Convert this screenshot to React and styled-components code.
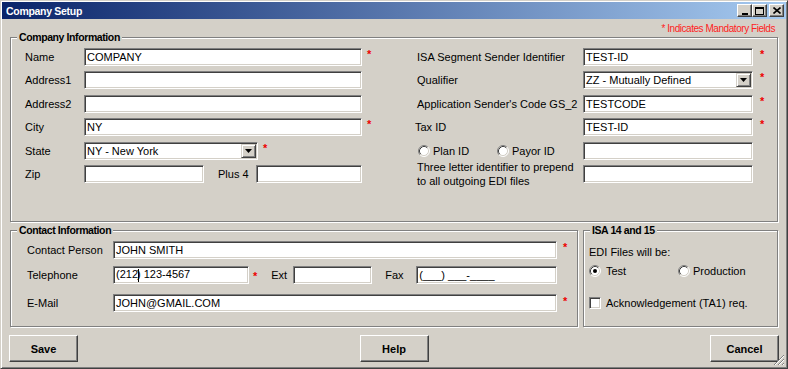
import React from 'react';
import styled, { createGlobalStyle } from 'styled-components';

const GlobalStyle = createGlobalStyle`
  html, body { margin: 0; padding: 0; background: #D4D0C8; }
  body { font-family: "Liberation Sans", Arial, sans-serif; font-size: 11px; color: #000; }
  * { box-sizing: border-box; }
`;

const Window = styled.div`
  position: relative;
  width: 788px;
  height: 369px;
  border: 1px solid;
  border-color: #D4D0C8 #404040 #404040 #D4D0C8;
  padding: 1px;
  box-shadow: inset 1px 1px 0 #fff, inset -1px -1px 0 #808080;
  background: #D4D0C8;
  display: flex;
  flex-direction: column;
`;

const TitleBar = styled.div`
  height: 17px;
  flex: none;
  background: linear-gradient(to right, #0A246A, #A6CAF0);
  display: flex;
  align-items: center;
  justify-content: space-between;
  padding: 0 2px 0 4px;
`;

const TitleText = styled.span`
  color: #fff;
  font-weight: bold;
  font-size: 10.5px;
  letter-spacing: -0.3px;
`;

const CaptionGroup = styled.div`
  display: flex;
  align-items: center;
`;

const CaptionBtn = styled.div`
  width: 15px;
  height: 13px;
  margin-left: ${p => p.$ml || 0}px;
  background: #D4D0C8;
  border: 1px solid;
  border-color: #fff #404040 #404040 #fff;
  box-shadow: inset -1px -1px 0 #808080;
  display: flex;
  align-items: center;
  justify-content: center;
`;

const Content = styled.div`
  flex: 1;
  display: flex;
  flex-direction: column;
  padding: 0 8px;
`;

const NoteRow = styled.div`
  height: 18px;
  flex: none;
  display: flex;
  align-items: center;
  justify-content: flex-end;
  padding-right: 3px;
  color: #F22;
  font-size: 10px;
  letter-spacing: -0.45px;
`;

const Group = styled.div`
  position: relative;
  flex: ${p => (p.$grow ? '1' : 'none')};
  width: ${p => (p.$w ? `${p.$w}px` : 'auto')};
  height: ${p => p.$h}px;
  border: 1px solid #808080;
  box-shadow: inset 1px 1px 0 #fff, 1px 1px 0 #fff;
`;

const Legend = styled.span`
  position: absolute;
  top: -7px;
  left: 6px;
  padding: 0 2px;
  background: #D4D0C8;
  font-weight: bold;
  font-size: 10.5px;
  letter-spacing: -0.4px;
  line-height: 12px;
`;

const CompanyGrid = styled.div`
  display: grid;
  grid-template-columns: 59px 278px 55px 166px 170px 1fr;
  grid-template-rows: repeat(6, 18px);
  row-gap: 5.4px;
  padding: 10px 0 0 14px;
  align-items: center;
`;

const Label = styled.span`
  white-space: nowrap;
  margin-left: ${p => p.$ml || 0}px;
  width: ${p => (p.$w ? `${p.$w}px` : 'auto')};
  flex: none;
  line-height: 14px;
`;

const Field = styled.div`
  width: ${p => (p.$w ? `${p.$w}px` : '100%')};
  flex: none;
  height: 18px;
  background: #fff;
  border: 1px solid;
  border-color: #808080 #fff #fff #808080;
  box-shadow: inset 1px 1px 0 #404040, inset -1px -1px 0 #D4D0C8;
  padding: 0 0 0 2px;
  display: flex;
  align-items: center;
  white-space: nowrap;
  overflow: hidden;
  font-size: 11px;
`;

const DropBtn = styled.div`
  margin: 1px 1px 1px auto;
  width: 15px;
  height: 14px;
  flex: none;
  background: #D4D0C8;
  border: 1px solid;
  border-color: #D4D0C8 #404040 #404040 #D4D0C8;
  box-shadow: inset 1px 1px 0 #fff, inset -1px -1px 0 #808080;
  display: flex;
  align-items: center;
  justify-content: center;
`;

const Star = styled.span`
  align-self: flex-start;
  color: #E00;
  font-weight: bold;
  font-size: 11px;
  line-height: 11px;
  margin-left: ${p => p.$ml || 0}px;
  margin-top: ${p => p.$mt ?? 1}px;
  flex: none;
`;

const StarCell = styled.div`
  align-self: stretch;
  display: flex;
  padding-left: ${p => p.$pl}px;
`;

const InlineRow = styled.div`
  display: flex;
  align-items: center;
  height: 18px;
`;

const TwoLine = styled.span`
  line-height: 14px;
  align-self: center;
  margin-top: 1px;
`;

const RadioWrap = styled.label`
  display: flex;
  align-items: center;
  width: ${p => (p.$w ? `${p.$w}px` : 'auto')};
  margin-left: ${p => p.$ml || 0}px;
  gap: ${p => p.$gap || 3}px;
  flex: none;
`;

const LowerRow = styled.div`
  display: flex;
  gap: 5px;
  margin-top: 8px;
  flex: none;
`;

const ContactBody = styled.div`
  display: flex;
  flex-direction: column;
  padding: 10px 0 0 16px;
`;

const ContactRow = styled.div`
  display: flex;
  align-items: center;
  height: 18px;
  margin-top: ${p => p.$mt || 0}px;
`;

const IsaBody = styled.div`
  display: flex;
  flex-direction: column;
  padding: 14px 0 0 5px;
`;

const IsaRow = styled.div`
  display: flex;
  align-items: center;
  height: 14px;
  margin-top: ${p => p.$mt || 0}px;
  line-height: 14px;
`;

const CheckBox = styled.span`
  width: 12px;
  height: 12px;
  flex: none;
  background: #fff;
  border: 1px solid;
  border-color: #808080 #fff #fff #808080;
  box-shadow: inset 1px 1px 0 #404040, inset -1px -1px 0 #D4D0C8;
`;

const ButtonRow = styled.div`
  display: flex;
  justify-content: space-between;
  margin: 8px -1px 0;
  flex: none;
`;

const Button = styled.button`
  width: 69px;
  height: 27px;
  background: #D4D0C8;
  border: 1px solid;
  border-color: #fff #404040 #404040 #fff;
  box-shadow: inset -1px -1px 0 #808080, inset 1px 1px 0 #D4D0C8;
  font-family: "Liberation Sans", Arial, sans-serif;
  font-weight: bold;
  font-size: 11px;
  color: #000;
  padding: 0;
`;

const Caret = styled.span`
  display: inline-block;
  width: 1px;
  height: 13px;
  background: #000;
  margin-right: -2px;
  vertical-align: middle;
`;

const Grip = styled.svg`
  position: absolute;
  right: 2px;
  bottom: 2px;
`;

const Arrow = () => (
  <svg width="7" height="4" viewBox="0 0 7 4"><path d="M0 0h7L3.5 4z" fill="#000" /></svg>
);

const Select = ({ w, children }) => (
  <Field $w={w}>
    <span>{children}</span>
    <DropBtn><Arrow /></DropBtn>
  </Field>
);

const Radio = ({ checked }) => (
  <svg width="12" height="12" viewBox="0 0 12 12" style={{ flex: 'none' }}>
    <circle cx="6" cy="6" r="5" fill="#fff" />
    <path d="M2.11 9.89A5.5 5.5 0 0 1 9.89 2.11" fill="none" stroke="#808080" />
    <path d="M2.82 9.18A4.5 4.5 0 0 1 9.18 2.82" fill="none" stroke="#404040" />
    <path d="M2.11 9.89A5.5 5.5 0 0 0 9.89 2.11" fill="none" stroke="#fff" />
    <path d="M2.82 9.18A4.5 4.5 0 0 0 9.18 2.82" fill="none" stroke="#D4D0C8" />
    {checked && <circle cx="6" cy="6" r="2" fill="#000" />}
  </svg>
);

export default function App() {
  return (
    <>
      <GlobalStyle />
      <Window>
        <TitleBar>
          <TitleText>Company Setup</TitleText>
          <CaptionGroup>
            <CaptionBtn>
              <svg width="8" height="8" viewBox="0 0 8 8"><rect x="1" y="6" width="6" height="2" fill="#000" /></svg>
            </CaptionBtn>
            <CaptionBtn>
              <svg width="9" height="8" viewBox="0 0 9 8"><path d="M0 0h9v8H0zM1 2v5h7V2z" fillRule="evenodd" fill="#000" /></svg>
            </CaptionBtn>
            <CaptionBtn $ml={2}>
              <svg width="8" height="7" viewBox="0 0 8 7"><path d="M0.5 0.5l7 6M7.5 0.5l-7 6" stroke="#000" strokeWidth="1.6" /></svg>
            </CaptionBtn>
          </CaptionGroup>
        </TitleBar>
        <Content>
          <NoteRow>* Indicates Mandatory Fields</NoteRow>
          <Group $h={185}>
            <Legend>Company Information</Legend>
            <CompanyGrid>
              <Label>Name</Label>
              <Field>COMPANY</Field>
              <StarCell $pl={5}><Star>*</Star></StarCell>
              <Label>ISA Segment Sender Identifier</Label>
              <Field>TEST-ID</Field>
              <StarCell $pl={7}><Star>*</Star></StarCell>

              <Label>Address1</Label>
              <Field />
              <div />
              <Label>Qualifier</Label>
              <Select>ZZ - Mutually Defined</Select>
              <StarCell $pl={7}><Star>*</Star></StarCell>

              <Label>Address2</Label>
              <Field />
              <div />
              <Label>Application Sender's Code GS_2</Label>
              <Field>TESTCODE</Field>
              <StarCell $pl={7}><Star>*</Star></StarCell>

              <Label>City</Label>
              <Field>NY</Field>
              <StarCell $pl={5}><Star>*</Star></StarCell>
              <Label $ml={-2}>Tax ID</Label>
              <Field>TEST-ID</Field>
              <StarCell $pl={7}><Star>*</Star></StarCell>

              <Label>State</Label>
              <InlineRow>
                <Select w={174}>NY - New York</Select>
                <Star $ml={5}>*</Star>
              </InlineRow>
              <div />
              <InlineRow>
                <RadioWrap $ml={1} $w={79}><Radio />Plan ID</RadioWrap>
                <RadioWrap><Radio />Payor ID</RadioWrap>
              </InlineRow>
              <Field />
              <div />

              <Label>Zip</Label>
              <InlineRow>
                <Field $w={120} />
                <Label $ml={14} $w={38}>Plus 4</Label>
                <Field $w={106} />
              </InlineRow>
              <div />
              <TwoLine>Three letter identifier to prepend<br />to all outgoing EDI files</TwoLine>
              <Field />
              <div />
            </CompanyGrid>
          </Group>
          <LowerRow>
            <Group $w={568} $h={97}>
              <Legend>Contact Information</Legend>
              <ContactBody>
                <ContactRow>
                  <Label $w={86}>Contact Person</Label>
                  <Field $w={444}>JOHN SMITH</Field>
                  <Star $ml={6} $mt={1}>*</Star>
                </ContactRow>
                <ContactRow $mt={7}>
                  <Label $w={86}>Telephone</Label>
                  <Field $w={136}><span>(212<Caret />) 123-4567</span></Field>
                  <Star $ml={4} $mt={5}>*</Star>
                  <Label $ml={14} $w={22}>Ext</Label>
                  <Field $w={79} />
                  <Label $ml={13} $w={31}>Fax</Label>
                  <Field $w={141}>(___) ___-____</Field>
                </ContactRow>
                <ContactRow $mt={10}>
                  <Label $w={86}>E-Mail</Label>
                  <Field $w={444}>JOHN@GMAIL.COM</Field>
                  <Star $ml={6} $mt={2}>*</Star>
                </ContactRow>
              </ContactBody>
            </Group>
            <Group $grow $h={97}>
              <Legend>ISA 14 and 15</Legend>
              <IsaBody>
                <IsaRow>EDI Files will be:</IsaRow>
                <IsaRow $mt={5}>
                  <RadioWrap $w={89} $gap={5}><Radio checked />Test</RadioWrap>
                  <RadioWrap $gap={3}><Radio />Production</RadioWrap>
                </IsaRow>
                <IsaRow $mt={18}>
                  <RadioWrap $gap={5}><CheckBox />Acknowledgement (TA1) req.</RadioWrap>
                </IsaRow>
              </IsaBody>
            </Group>
          </LowerRow>
          <ButtonRow>
            <Button>Save</Button>
            <Button>Help</Button>
            <Button>Cancel</Button>
          </ButtonRow>
        </Content>
        <Grip width="12" height="12" viewBox="0 0 12 12">
          <path d="M11 1L1 11M11 5L5 11M11 9L9 11" stroke="#808080" strokeWidth="1" />
          <path d="M11 2L2 11M11 6L6 11M11 10L10 11" stroke="#fff" strokeWidth="1" />
        </Grip>
      </Window>
    </>
  );
}
